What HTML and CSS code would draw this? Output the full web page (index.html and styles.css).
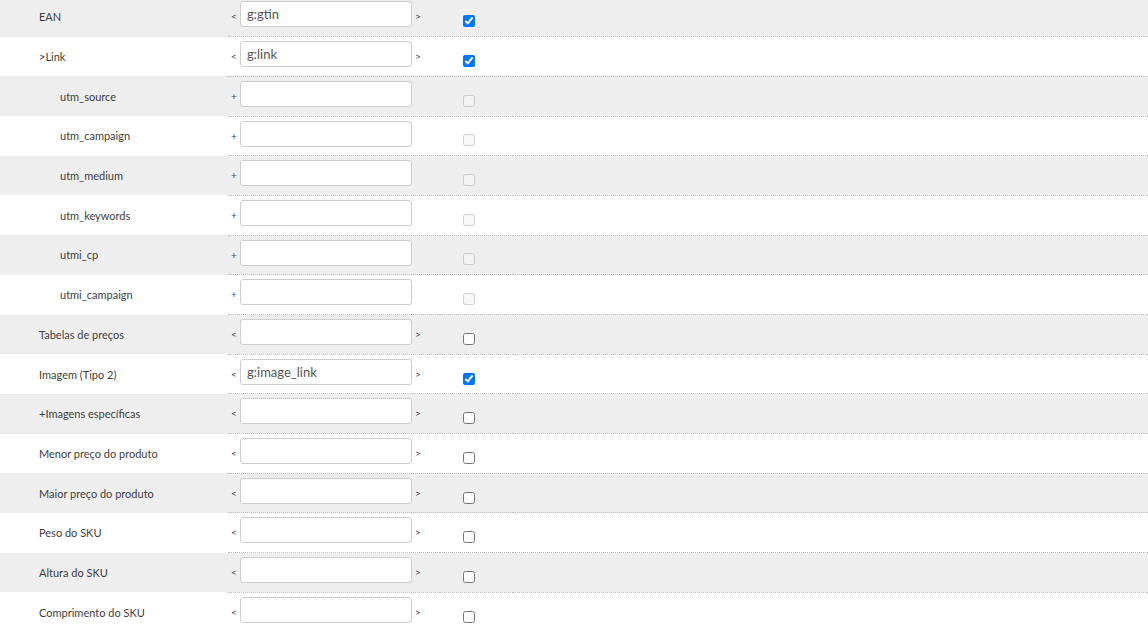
FILE: index.html
```html
<!DOCTYPE html>
<html lang="pt">
<head>
  <meta charset="UTF-8">
  <title>Mapeamento de campos</title>
  <link rel="stylesheet" href="styles.css">
</head>
<body>
  <table class="mapping">
    <tr>
      <td class="label">EAN</td>
      <td class="field"><span class="mark">&lt;</span><input type="text" value="g:gtin"><span class="mark">&gt;</span></td>
      <td class="check"><input type="checkbox" checked></td>
      <td class="rest"></td>
    </tr>
    <tr>
      <td class="label">&gt;Link</td>
      <td class="field"><span class="mark">&lt;</span><input type="text" value="g:link"><span class="mark">&gt;</span></td>
      <td class="check"><input type="checkbox" checked></td>
      <td class="rest"></td>
    </tr>
    <tr>
      <td class="label sub">utm_source</td>
      <td class="field"><span class="mark">+</span><input type="text"></td>
      <td class="check"><input type="checkbox" disabled></td>
      <td class="rest"></td>
    </tr>
    <tr>
      <td class="label sub">utm_campaign</td>
      <td class="field"><span class="mark">+</span><input type="text"></td>
      <td class="check"><input type="checkbox" disabled></td>
      <td class="rest"></td>
    </tr>
    <tr>
      <td class="label sub">utm_medium</td>
      <td class="field"><span class="mark">+</span><input type="text"></td>
      <td class="check"><input type="checkbox" disabled></td>
      <td class="rest"></td>
    </tr>
    <tr>
      <td class="label sub">utm_keywords</td>
      <td class="field"><span class="mark">+</span><input type="text"></td>
      <td class="check"><input type="checkbox" disabled></td>
      <td class="rest"></td>
    </tr>
    <tr>
      <td class="label sub">utmi_cp</td>
      <td class="field"><span class="mark">+</span><input type="text"></td>
      <td class="check"><input type="checkbox" disabled></td>
      <td class="rest"></td>
    </tr>
    <tr>
      <td class="label sub">utmi_campaign</td>
      <td class="field"><span class="mark">+</span><input type="text"></td>
      <td class="check"><input type="checkbox" disabled></td>
      <td class="rest"></td>
    </tr>
    <tr>
      <td class="label">Tabelas de preços</td>
      <td class="field"><span class="mark">&lt;</span><input type="text"><span class="mark">&gt;</span></td>
      <td class="check"><input type="checkbox"></td>
      <td class="rest"></td>
    </tr>
    <tr>
      <td class="label">Imagem (Tipo 2)</td>
      <td class="field"><span class="mark">&lt;</span><input type="text" value="g:image_link"><span class="mark">&gt;</span></td>
      <td class="check"><input type="checkbox" checked></td>
      <td class="rest"></td>
    </tr>
    <tr>
      <td class="label">+Imagens específicas</td>
      <td class="field"><span class="mark">&lt;</span><input type="text"><span class="mark">&gt;</span></td>
      <td class="check"><input type="checkbox"></td>
      <td class="rest"></td>
    </tr>
    <tr>
      <td class="label">Menor preço do produto</td>
      <td class="field"><span class="mark">&lt;</span><input type="text"><span class="mark">&gt;</span></td>
      <td class="check"><input type="checkbox"></td>
      <td class="rest"></td>
    </tr>
    <tr>
      <td class="label">Maior preço do produto</td>
      <td class="field"><span class="mark">&lt;</span><input type="text"><span class="mark">&gt;</span></td>
      <td class="check"><input type="checkbox"></td>
      <td class="rest"></td>
    </tr>
    <tr>
      <td class="label">Peso do SKU</td>
      <td class="field"><span class="mark">&lt;</span><input type="text"><span class="mark">&gt;</span></td>
      <td class="check"><input type="checkbox"></td>
      <td class="rest"></td>
    </tr>
    <tr>
      <td class="label">Altura do SKU</td>
      <td class="field"><span class="mark">&lt;</span><input type="text"><span class="mark">&gt;</span></td>
      <td class="check"><input type="checkbox"></td>
      <td class="rest"></td>
    </tr>
    <tr>
      <td class="label">Comprimento do SKU</td>
      <td class="field"><span class="mark">&lt;</span><input type="text"><span class="mark">&gt;</span></td>
      <td class="check"><input type="checkbox"></td>
      <td class="rest"></td>
    </tr>
  </table>
</body>
</html>
```

FILE: styles.css
```css
body {
  margin: 0;
  background-color: #fff;
  font-family: Lato, 'Open Sans', sans-serif;
  color: #3d3d3d;
  overflow: hidden;
}

.mapping {
  width: 100%;
  border-collapse: collapse;
  margin-top: -3px;
}

.mapping tr {
  height: 39.7px;
}

.mapping tr:nth-child(odd) {
  background-color: #eee;
}

.mapping td {
  padding: 0;
  border-bottom: 1px dotted #bbb;
}

.mapping td.label {
  width: 228px;
  padding-left: 39px;
  box-sizing: border-box;
  font-size: 11px;
  color: #3d3d3d;
  border-bottom: none;
}

.mapping td.label.sub {
  padding-left: 60px;
}

.field {
  width: 212px;
  white-space: nowrap;
  vertical-align: top;
  padding-top: 4px !important;
}

.mark {
  display: inline-block;
  width: 12px;
  font-size: 10px;
  color: #444;
  text-align: center;
  vertical-align: middle;
  position: relative;
  top: 2px;
}

.field input {
  width: 172px;
  height: 26px;
  box-sizing: border-box;
  border: 1px solid #ccc;
  border-radius: 3px;
  padding: 0 6px;
  font-family: Lato, 'Open Sans', sans-serif;
  font-size: 13px;
  color: #555;
  background: #fff;
  vertical-align: middle;
  margin: 0;
}

.check {
  width: 50px;
  padding-left: 23px !important;
  vertical-align: middle;
}

.check input {
  margin: 12px 0 0 0;
  width: 12px;
  height: 12px;
}
```
